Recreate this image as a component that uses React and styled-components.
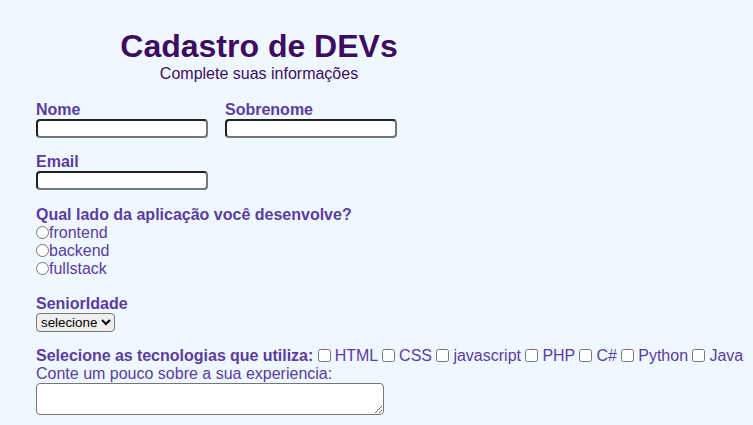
import React from "react";
import styled, { createGlobalStyle } from "styled-components";

const GlobalStyle = createGlobalStyle`
  body {
    margin: 8px;
    background: #f0f8ff;
    font-family: "Liberation Sans", Arial, sans-serif;
  }
`;

const Form = styled.form`
  display: flex;
  flex-direction: column;
  padding: 20px 0 0 28px;
  color: #5b3c9f;
`;

const Header = styled.header`
  width: 446px;
  text-align: center;
  margin-bottom: 18px;
`;

const Title = styled.h1`
  margin: 0;
  font-size: 32px;
  color: #3d0c62;
`;

const Subtitle = styled.p`
  margin: 0;
  font-size: 16px;
  color: #3d0c62;
`;

const Row = styled.div`
  display: flex;
  gap: 17px;
  margin-bottom: 15px;
`;

const Field = styled.div`
  display: flex;
  flex-direction: column;
  align-items: flex-start;
  margin-bottom: ${({ $mb }) => $mb || 0}px;
`;

const Label = styled.label`
  font-size: 16px;
  font-weight: bold;
  line-height: 18px;
`;

const TextInput = styled.input`
  width: 172px;
  height: 19px;
  box-sizing: border-box;
  border: 2px inset #767676;
  border-radius: 4px;
  background: #fff;
  padding: 1px 2px;
`;

const RadioRow = styled.label`
  display: flex;
  align-items: center;
  font-size: 16px;
  line-height: 18px;
`;

const Radio = styled.input`
  margin: 0 0 1px;
  width: 13px;
  height: 13px;
`;

const Select = styled.select`
  font-family: "Liberation Sans", Arial, sans-serif;
  font-size: 13.33px;
  border-radius: 4px;
`;

const TechLine = styled.div`
  font-size: 16px;
  line-height: 18px;
  white-space: nowrap;
  word-spacing: -0.25px;
`;

const TechTitle = styled.span`
  font-weight: bold;
`;

const Check = styled.input`
  margin: 0;
  width: 13px;
  height: 13px;
  vertical-align: -1px;
`;

const Experience = styled.label`
  font-size: 16px;
  line-height: 18px;
`;

const TextArea = styled.textarea`
  width: 348px;
  height: 32px;
  box-sizing: border-box;
  border-radius: 4px;
  resize: both;
`;

const techs = ["HTML", "CSS", "javascript", "PHP", "C#", "Python", "Java"];

export default function App() {
  return (
    <>
      <GlobalStyle />
      <Form>
        <Header>
          <Title>Cadastro de DEVs</Title>
          <Subtitle>Complete suas informações</Subtitle>
        </Header>

        <Row>
          <Field>
            <Label htmlFor="nome">Nome</Label>
            <TextInput id="nome" type="text" />
          </Field>
          <Field>
            <Label htmlFor="sobrenome">Sobrenome</Label>
            <TextInput id="sobrenome" type="text" />
          </Field>
        </Row>

        <Field $mb={16}>
          <Label htmlFor="email">Email</Label>
          <TextInput id="email" type="email" />
        </Field>

        <Field $mb={17}>
          <Label>Qual lado da aplicação você desenvolve?</Label>
          {["frontend", "backend", "fullstack"].map((lado) => (
            <RadioRow key={lado}>
              <Radio type="radio" name="lado" value={lado} />
              {lado}
            </RadioRow>
          ))}
        </Field>

        <Field $mb={15}>
          <Label htmlFor="senioridade">SeniorIdade</Label>
          <Select id="senioridade">
            <option>selecione</option>
            <option>junior</option>
            <option>pleno</option>
            <option>senior</option>
          </Select>
        </Field>

        <Field>
          <TechLine>
            <TechTitle>Selecione as tecnologias que utiliza:</TechTitle>
            {techs.map((t) => (
              <React.Fragment key={t}>
                {" "}
                <Check type="checkbox" value={t} /> {t}
              </React.Fragment>
            ))}
          </TechLine>
          <Experience htmlFor="exp">Conte um pouco sobre a sua experiencia:</Experience>
          <TextArea id="exp" />
        </Field>
      </Form>
    </>
  );
}
